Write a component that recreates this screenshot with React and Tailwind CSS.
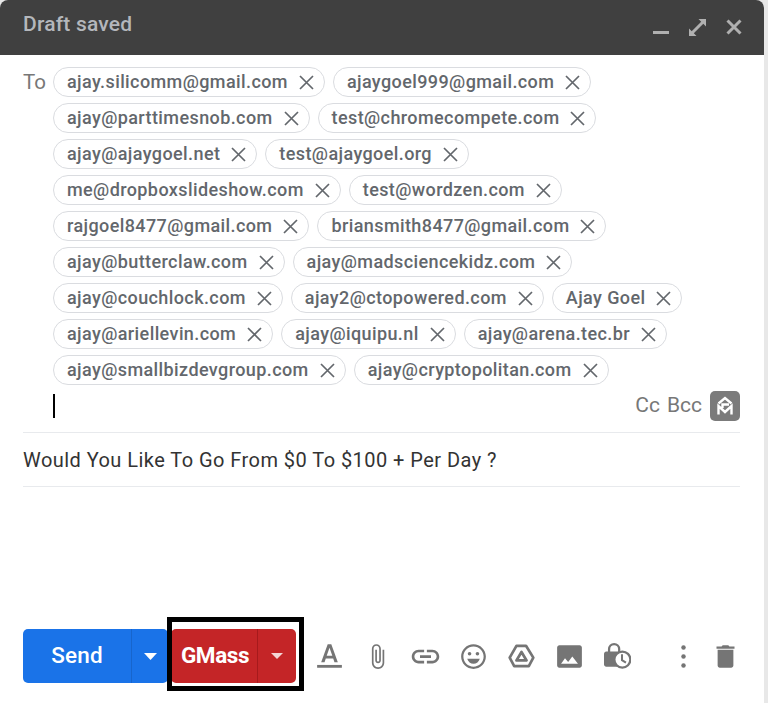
import React from 'react'

const rows = [
  ['ajay.silicomm@gmail.com', 'ajaygoel999@gmail.com'],
  ['ajay@parttimesnob.com', 'test@chromecompete.com'],
  ['ajay@ajaygoel.net', 'test@ajaygoel.org'],
  ['me@dropboxslideshow.com', 'test@wordzen.com'],
  ['rajgoel8477@gmail.com', 'briansmith8477@gmail.com'],
  ['ajay@butterclaw.com', 'ajay@madsciencekidz.com'],
  ['ajay@couchlock.com', 'ajay2@ctopowered.com', 'Ajay Goel'],
  ['ajay@ariellevin.com', 'ajay@iquipu.nl', 'ajay@arena.tec.br'],
  ['ajay@smallbizdevgroup.com', 'ajay@cryptopolitan.com'],
]

const Chip = ({ label }) => (
  <div className="flex h-[30px] items-center rounded-full border border-[#dadce0] pl-[13px] pr-[10px] text-[18px] font-medium tracking-[0.4px] text-[#63676c]">
    <span className="pb-[2px]">{label}</span>
    <svg className="ml-[11px] shrink-0" width="15" height="15" viewBox="0 0 15 15" fill="none" stroke="#63676c" strokeWidth="1.7">
      <path d="M1 1l13 13M14 1L1 14" />
    </svg>
  </div>
)

const Icon = ({ size = 27, children }) => (
  <svg className="shrink-0" width={size} height={size} viewBox="0 0 24 24" fill="#757575">
    {children}
  </svg>
)

const Caret = () => (
  <svg width="13" height="7" viewBox="0 0 13 7" fill="#ffffff">
    <path d="M0 0h13L6.5 7z" />
  </svg>
)

const App = () => {
  return (
    <div className="h-[703px] w-[768px] overflow-hidden bg-[#e8e8e8] font-['Roboto',sans-serif]">
      <div className="flex h-full w-[764px] flex-col rounded-t-lg bg-white">
        <div className="flex h-[55px] items-center rounded-t-lg bg-[#404040] pl-[23px] pr-[22px]">
          <span className="pb-[5px] text-[21px] font-medium tracking-[0.2px] text-[#b4b7bc]">Draft saved</span>
          <div className="ml-auto flex items-center gap-[20px]">
            <svg width="16" height="16" viewBox="0 0 16 16" fill="#b0b0b0">
              <path d="M0 11h16v3H0z" />
            </svg>
            <svg width="17" height="17" viewBox="0 0 17 17" fill="#b0b0b0">
              <path d="M9.5 0H17v7.500l-2.700-2.700L4.800 14.300 7.500 17H0V9.500l2.700 2.700 9.500-9.500z" />
            </svg>
            <svg className="mb-[2px]" width="16" height="16" viewBox="0 0 16 16" fill="none" stroke="#b0b0b0" strokeWidth="3">
              <path d="M1.500 1.500l13 13M14.500 1.500l-13 13" />
            </svg>
          </div>
        </div>

        <div className="ml-[23px] mr-[24px] flex flex-col border-b border-[#e8eaed] pb-[12px] pt-[12px]">
          <div className="flex">
            <span className="w-[30px] pt-[2px] text-[20.5px] leading-[26px] text-[#777777]">To</span>
            <div className="flex flex-col gap-[6px]">
              {rows.map((row, i) => (
                <div key={i} className="flex gap-[8px]">
                  {row.map((label) => (
                    <Chip key={label} label={label} />
                  ))}
                </div>
              ))}
            </div>
          </div>
          <div className="mt-[7px] flex h-[28px] items-center">
            <div className="ml-[30px] h-[24px] w-[2px] bg-black" />
            <span className="ml-auto text-[21px] text-[#777777]">Cc</span>
            <span className="ml-[7px] text-[21px] text-[#777777]">Bcc</span>
            <div className="ml-[8px] flex h-[30px] w-[30px] items-center justify-center rounded-[5px] bg-[#7b7b7b]">
              <svg width="20" height="22" viewBox="0 0 20 22" fill="none" stroke="#ffffff" strokeWidth="2.4">
                <path d="M3.500 19.500V11l6.500 6 6.500-6v8.500M3.500 8.500L10 3l6.500 5.500M14 9.500H7.500V13" />
              </svg>
            </div>
          </div>
        </div>

        <div className="ml-[23px] mr-[24px] flex h-[54px] items-center border-b border-[#e8eaed] text-[20px] tracking-[0.45px] text-[#333333]">
          Would You Like To Go From $0 To $100 + Per Day ?
        </div>

        <div className="mt-[142px] flex h-[54px] items-center pl-[23px]">
          <div className="flex h-full w-[145px] shrink-0 rounded-[5px] bg-[#1a73e8] text-white">
            <div className="flex w-[109px] items-center justify-center border-r border-[#1765cc] text-[22.5px] font-medium tracking-[0.2px]">
              Send
            </div>
            <div className="flex flex-1 items-center justify-center">
              <Caret />
            </div>
          </div>
          <div className="relative ml-[3px] flex h-full w-[125px] shrink-0 rounded-[5px] bg-[#c42527] text-white">
            <div className="flex w-[87px] items-center justify-center border-r border-[#a61a1c] pl-[2px] text-[22.5px] font-bold tracking-[-0.4px]">
              GMass
            </div>
            <div className="flex flex-1 items-center justify-center">
              <svg width="12" height="6" viewBox="0 0 12 6" fill="#f4d5d5">
                <path d="M0 0h12L6 6z" />
              </svg>
            </div>
            <div className="absolute left-[-4px] top-[-12px] h-[74px] w-[137px] border-[5px] border-black" />
          </div>

          <div className="ml-[9px] flex items-center">
            <div className="flex w-[48px] justify-center">
              <Icon>
                <path d="M1 19.500h22v2.500H1z" />
                <path d="M10.400 1L4.600 17h3l1.100-3.300h6.600l1.100 3.300h3L13.600 1h-3.200zm-.9 10.300L12 4.300l2.500 7h-5z" />
              </Icon>
            </div>
            <div className="flex w-[48px] justify-center">
              <Icon>
                <path d="M16.500 6v11.500c0 2.210-1.790 4-4 4s-4-1.790-4-4V5c0-1.380 1.120-2.500 2.500-2.500s2.500 1.120 2.500 2.500v10.500c0 .55-.45 1-1 1s-1-.45-1-1V6H10v9.500c0 1.380 1.120 2.500 2.500 2.500s2.500-1.120 2.500-2.500V5c0-2.210-1.790-4-4-4S7 2.790 7 5v12.500c0 3.040 2.460 5.500 5.500 5.500s5.500-2.460 5.500-5.500V6h-1.500z" />
              </Icon>
            </div>
            <div className="flex w-[48px] justify-center">
              <Icon size={33}>
                <path d="M3.900 12c0-1.710 1.390-3.100 3.100-3.100h4V7H7c-2.760 0-5 2.240-5 5s2.240 5 5 5h4v-1.900H7c-1.710 0-3.100-1.390-3.100-3.100zM8 13h8v-2H8v2zm9-6h-4v1.900h4c1.710 0 3.100 1.390 3.100 3.100s-1.390 3.100-3.100 3.100h-4V17h4c2.760 0 5-2.240 5-5s-2.240-5-5-5z" />
              </Icon>
            </div>
            <div className="flex w-[48px] justify-center">
              <Icon>
                <path d="M11.990 1C5.920 1 1 5.930 1 12s4.920 11 10.990 11C18.070 23 23 18.070 23 12S18.070 1 11.990 1zM12 21c-4.970 0-9-4.030-9-9s4.030-9 9-9 9 4.030 9 9-4.030 9-9 9z" />
                <circle cx="15.500" cy="9.500" r="1.600" />
                <circle cx="8.500" cy="9.500" r="1.600" />
                <path d="M12 18.500c2.600 0 4.800-1.800 5.600-4.500H6.400c.8 2.700 3 4.500 5.600 4.500z" />
              </Icon>
            </div>
            <div className="flex w-[48px] justify-center">
              <Icon>
                <path fill="none" stroke="#757575" strokeWidth="2.400" strokeLinejoin="round" d="M7.500 2.500h8.500L22.500 13l-4 7.500h-13L1.500 13z" />
                <path fill="none" stroke="#757575" strokeWidth="2.400" strokeLinejoin="round" d="M12 8l4.500 7.500h-9z" />
              </Icon>
            </div>
            <div className="flex w-[48px] justify-center">
              <Icon>
                <path d="M23 20V4c0-1.100-.9-2-2-2H3c-1.100 0-2 .9-2 2v16c0 1.100.9 2 2 2h18c1.100 0 2-.9 2-2zM8 13.500l2.800 3.400L14.500 12l5 6.500h-15L8 13.500z" />
              </Icon>
            </div>
            <div className="flex w-[48px] justify-center">
              <Icon>
                <path fill="none" stroke="#757575" strokeWidth="2" d="M4.500 9V5.500a4.500 4.500 0 0 1 9 0V9" />
                <path d="M2 7.500h14c1.100 0 2 .9 2 2V19c0 1.100-.9 2-2 2H2c-1.100 0-2-.9-2-2V9.500c0-1.100.9-2 2-2z" />
                <circle cx="16.300" cy="14.700" r="7.100" fill="#ffffff" stroke="#757575" strokeWidth="2" />
                <path fill="none" stroke="#757575" strokeWidth="1.800" d="M16 10v5.300l3.500 2.200" />
              </Icon>
            </div>
            <div className="ml-[24px] flex w-[36px] justify-center">
              <Icon>
                <circle cx="12" cy="4" r="2" />
                <circle cx="12" cy="12" r="2" />
                <circle cx="12" cy="20" r="2" />
              </Icon>
            </div>
            <div className="flex w-[48px] justify-center">
              <Icon>
                <path d="M5 20c0 1.100.9 2 2 2h10c1.100 0 2-.9 2-2V6H5v14zM20 3h-4.500l-1-1h-5l-1 1H4v2h16V3z" />
              </Icon>
            </div>
          </div>
        </div>
      </div>
    </div>
  )
}

export default App
